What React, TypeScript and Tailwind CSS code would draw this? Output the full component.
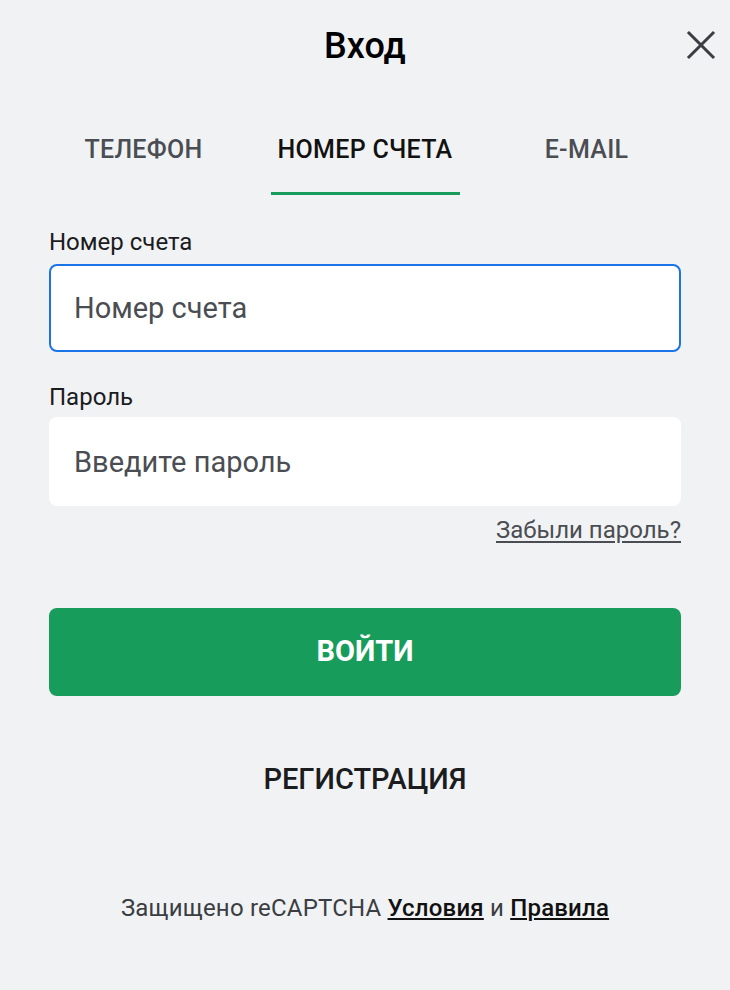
import { useState } from 'react';

const tabs = ['Телефон', 'Номер счета', 'E-mail'];

export default function App() {
  const [active, setActive] = useState(1);

  return (
    <div
      className="w-[730px] h-[990px] bg-[#f1f2f4] text-[#1b1c1e] px-[49px]"
      style={{ fontFamily: 'Roboto, "Noto Sans", sans-serif' }}
    >
      {/* шапка */}
      <div className="relative flex justify-center items-center h-[92px]">
        <h1 className="text-[36px] font-medium text-black leading-[40px]">Вход</h1>
        <button className="absolute right-[-36px] top-[29px] w-[32px] h-[32px] flex items-center justify-center text-[#3a3d42]">
          <svg width="30" height="30" viewBox="0 0 30 30" fill="none" stroke="currentColor" strokeWidth="3" strokeLinecap="square">
            <path d="M3 3 L27 27 M27 3 L3 27" />
          </svg>
        </button>
      </div>

      {/* вкладки */}
      <div className="flex justify-between mt-[24px]">
        {tabs.map((t, i) => (
          <button
            key={t}
            onClick={() => setActive(i)}
            className={
              'w-[189px] h-[79px] pb-[8px] flex items-center justify-center uppercase text-[25px] font-medium tracking-[0.3px] border-b-[3px] ' +
              (i === active ? 'text-[#111] border-[#189c5b]' : 'text-[#4a4d52] border-transparent')
            }
          >
            {t}
          </button>
        ))}
      </div>

      {/* форма */}
      <div className="mt-[33px]">
        <label className="block text-[24px] text-[#1b1c1e] leading-[28px]">Номер счета</label>
        <input
          placeholder="Номер счета"
          className="mt-[8px] w-full h-[88px] rounded-[8px] bg-white border-2 border-[#1a73e8] px-[23px] text-[29px] text-[#1b1c1e] placeholder:text-[#4a4d52] outline-none"
        />

        <label className="block mt-[31px] text-[24px] text-[#1b1c1e] leading-[28px]">Пароль</label>
        <input
          type="password"
          placeholder="Введите пароль"
          className="mt-[6px] w-full h-[89px] rounded-[8px] bg-white px-[25px] text-[29px] text-[#1b1c1e] placeholder:text-[#4a4d52] outline-none"
        />
        <div className="flex justify-end mt-[10px] leading-[28px]">
          <a href="#" className="text-[24px] text-[#4a4d52] underline underline-offset-[3px]">
            Забыли пароль?
          </a>
        </div>

        <button className="mt-[64px] w-full h-[88px] rounded-[8px] bg-[#189c5b] text-white text-[29px] font-bold uppercase">
          Войти
        </button>

        <div className="flex justify-center mt-[66px] leading-[34px]">
          <button className="text-[29px] font-medium uppercase text-[#1b1c1e] leading-[34px]">Регистрация</button>
        </div>

        <p className="mt-[97px] text-center text-[24px] tracking-[0.2px] leading-[30px] text-[#3a3d42]">
          Защищено reCAPTCHA{' '}
          <a href="#" className="underline font-medium text-[#111]">Условия</a> и{' '}
          <a href="#" className="underline font-medium text-[#111]">Правила</a>
        </p>
      </div>
    </div>
  );
}
